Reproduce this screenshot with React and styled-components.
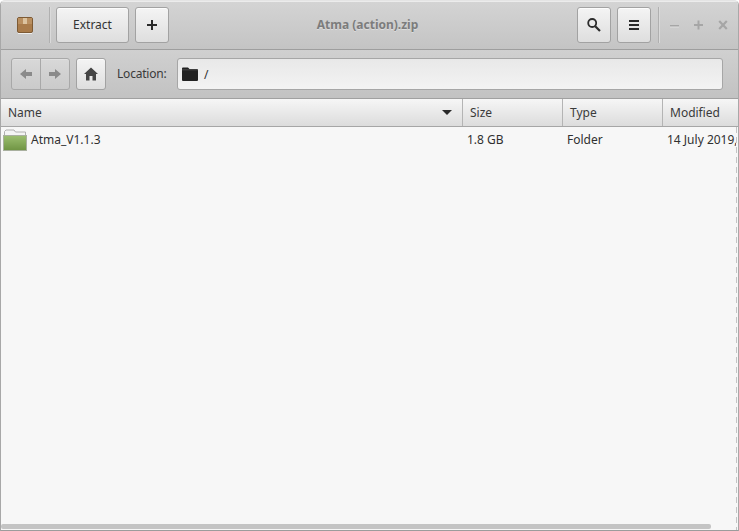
import React from 'react';
import styled, { createGlobalStyle } from 'styled-components';

const Global = createGlobalStyle`
  html, body {
    margin: 0;
    padding: 0;
    background: #fff;
  }
  * { box-sizing: border-box; }
`;

const Window = styled.div`
  width: 739px;
  height: 531px;
  display: flex;
  flex-direction: column;
  font-family: "Noto Sans", sans-serif;
  font-size: 12px;
  color: #303030;
  overflow: hidden;
  border-radius: 5px 5px 0 0;
  border: 1px solid #a8a8a8;
  border-top-color: #e4e4e4;
  border-bottom-color: #9c9c9c;
  background: #f7f7f7;
`;

const TitleBar = styled.div`
  height: 49px;
  flex: none;
  display: flex;
  align-items: center;
  padding: 0 10px 0 16px;
  background: linear-gradient(#d4d4d4, #c4c4c4);
  border-bottom: 1px solid #9e9e9e;
  box-shadow: inset 0 1px 0 #ececec;
`;

const AppIcon = styled.svg`
  width: 16px;
  height: 17px;
  flex: none;
`;

const Divider = styled.div`
  width: 1px;
  height: 36px;
  background: #b0b0b0;
  box-shadow: 1px 0 0 #dadada;
  flex: none;
  margin: ${(p) => p.$margin};
`;

const Button = styled.div`
  width: ${(p) => p.$width}px;
  height: ${(p) => p.$height || 36}px;
  margin-left: ${(p) => p.$left || 0}px;
  flex: none;
  display: flex;
  align-items: center;
  justify-content: center;
  border: 1px solid #a2a2a2;
  border-radius: 3px;
  background: linear-gradient(#f4f4f4, #dedede);
  box-shadow: inset 0 1px 0 #fcfcfc;
  color: #333;
  font-size: 12px;
`;

const ButtonLabel = styled.span`
  margin-bottom: 2px;
`;

const Title = styled.div`
  flex: 1;
  text-align: center;
  font-weight: 700;
  font-size: 12px;
  color: #7c7c7c;
  padding: 0 11px 2px 0;
  text-shadow: 0 1px 0 #dcdcdc;
`;

const WinControls = styled.div`
  display: flex;
  align-items: center;
  gap: 14px;
  margin-left: 11px;
`;

const Toolbar = styled.div`
  height: 49px;
  flex: none;
  display: flex;
  align-items: center;
  padding: 0 15px 0 10px;
  background: linear-gradient(#d0d0d0, #c2c2c2);
  border-bottom: 1px solid #a0a0a0;
`;

const NavGroup = styled.div`
  width: 59px;
  height: 32px;
  flex: none;
  display: flex;
  border: 1px solid #a8a8a8;
  border-radius: 3px;
  background: linear-gradient(#d8d8d8, #cacaca);
  box-shadow: inset 0 1px 0 #e0e0e0;
`;

const NavPart = styled.div`
  flex: 1;
  display: flex;
  align-items: center;
  justify-content: center;
  border-left: ${(p) => (p.$split ? '1px solid #a8a8a8' : 'none')};
`;

const LocationLabel = styled.span`
  margin: 0 0 2px 11px;
  width: 60px;
  flex: none;
  color: #3a3a3a;
  letter-spacing: -0.2px;
`;

const LocationEntry = styled.div`
  flex: 1;
  height: 32px;
  display: flex;
  align-items: center;
  gap: 6px;
  padding-left: 4px;
  border: 1px solid #a6a6a6;
  border-radius: 3px;
  background: linear-gradient(#e8e8e8, #f3f3f3);
  color: #303030;
`;

const Header = styled.div`
  height: 28px;
  flex: none;
  display: flex;
  background: linear-gradient(#f6f6f6, #dcdcdc);
  border-bottom: 1px solid #a6a6a6;
`;

const HeaderCell = styled.div`
  width: ${(p) => p.$width}px;
  flex: ${(p) => (p.$grow ? '1' : 'none')};
  display: flex;
  align-items: center;
  justify-content: space-between;
  padding: 0 10px 0 7px;
  border-right: ${(p) => (p.$last ? 'none' : '1px solid #b4b4b4')};
  color: #3a3a3a;
  white-space: nowrap;
`;

const SortArrow = styled.span`
  width: 0;
  height: 0;
  border-left: 5px solid transparent;
  border-right: 5px solid transparent;
  border-top: 5px solid #2a2a2a;
`;

const List = styled.div`
  flex: 1;
  position: relative;
  background: #f7f7f7;
`;

const Row = styled.div`
  height: 25px;
  display: flex;
  align-items: center;
`;

const Cell = styled.div`
  width: ${(p) => p.$width}px;
  flex: none;
  display: flex;
  align-items: center;
  gap: 4px;
  padding-left: ${(p) => p.$pad}px;
  white-space: nowrap;
  color: #303030;
`;

const ScrollBar = styled.div`
  position: absolute;
  left: 0;
  bottom: 1px;
  width: 710px;
  height: 5px;
  border-radius: 2px;
  background: #c4c4c4;
`;

const ResizeEdge = styled.div`
  position: absolute;
  right: 1px;
  top: 0;
  bottom: 0;
  width: 1px;
  background: repeating-linear-gradient(#c4c4c4 0 6px, #f7f7f7 6px 10px);
`;

const PackageIcon = () => (
  <AppIcon viewBox="0 0 16 17">
    <rect x="0.5" y="0.5" width="15" height="15" rx="1.5" fill="#a97b4a" stroke="#7d5a34" />
    <rect x="1" y="1" width="14" height="6" fill="#b98f60" />
    <rect x="6" y="1" width="4" height="6" fill="#dcc39f" />
    <rect x="1" y="16" width="14" height="1" fill="#eeeeee" />
  </AppIcon>
);

const PlusIcon = () => (
  <svg width="12" height="12" viewBox="0 0 12 12">
    <path d="M5 1h2v4h4v2H7v4H5V7H1V5h4z" fill="#2a2a2a" />
  </svg>
);

const SearchIcon = () => (
  <svg width="16" height="16" viewBox="0 0 16 16">
    <circle cx="6.2" cy="6" r="4" fill="none" stroke="#2c2c2c" strokeWidth="1.8" />
    <path d="M9.2 9.2L14 14" stroke="#2c2c2c" strokeWidth="2.2" />
  </svg>
);

const MenuIcon = () => (
  <svg width="10" height="10" viewBox="0 0 10 10">
    <path d="M0 0h10v2H0zM0 4h10v2H0zM0 8h10v2H0z" fill="#2a2a2a" />
  </svg>
);

const MinimizeIcon = () => (
  <svg width="10" height="12" viewBox="0 0 10 12">
    <rect x="0" y="6" width="9" height="1.6" fill="#a6a6a6" />
    <rect x="0" y="7.6" width="9" height="1" fill="#dcdcdc" />
  </svg>
);

const MaximizeIcon = () => (
  <svg width="10" height="12" viewBox="0 0 10 12">
    <path d="M3.5 1.5h2v3.5H9v2H5.5v3.5h-2V7H0V5h3.5z" fill="#a6a6a6" />
  </svg>
);

const CloseIcon = () => (
  <svg width="10" height="12" viewBox="0 0 10 12">
    <path d="M1.2 2l7.6 8M8.8 2l-7.6 8" stroke="#a6a6a6" strokeWidth="2.2" />
  </svg>
);

const BackIcon = () => (
  <svg width="12" height="10" viewBox="0 0 12 10">
    <path d="M0 5l6-5v3h6v4H6v3z" fill="#8a8a8a" />
  </svg>
);

const ForwardIcon = () => (
  <svg width="12" height="10" viewBox="0 0 12 10">
    <path d="M12 5L6 0v3H0v4h6v3z" fill="#8a8a8a" />
  </svg>
);

const HomeIcon = () => (
  <svg width="14" height="14" viewBox="0 0 14 14">
    <path d="M7 0.5L14 7h-2v6.5H8.5V9h-3v4.5H2V7H0z" fill="#444" />
  </svg>
);

const EntryFolder = () => (
  <svg width="16" height="14" viewBox="0 0 16 14">
    <path d="M0 1.5Q0 .5 1 .5h5l1.5 1.5H15q1 0 1 1V13q0 1-1 1H1q-1 0-1-1z" fill="#222" />
    <rect x="0" y="2.6" width="16" height="0.6" fill="#666" />
  </svg>
);

const RowFolder = () => (
  <svg width="24" height="22" viewBox="0 0 24 22">
    <defs>
      <linearGradient id="leaf" x1="0" y1="0" x2="0" y2="1">
        <stop offset="0" stopColor="#9cbf70" />
        <stop offset="1" stopColor="#6f9443" />
      </linearGradient>
    </defs>
    <path d="M1.5 6V2.5L3 1h8l1.5 2H22.5V6" fill="#f4f4f4" stroke="#b0b0b0" />
    <rect x="0.5" y="6.5" width="23" height="15" fill="url(#leaf)" stroke="#a9b09f" />
  </svg>
);

const App = () => {
	return (
		<Window>
			<Global />
			<TitleBar>
				<PackageIcon />
				<Divider $margin="0 6px 0 16px" />
				<Button $width={73}><ButtonLabel>Extract</ButtonLabel></Button>
				<Button $width={34} $left={6}><PlusIcon /></Button>
				<Title>Atma (action).zip</Title>
				<Button $width={34}><SearchIcon /></Button>
				<Button $width={34} $left={6}><MenuIcon /></Button>
				<Divider $margin="0 0 0 7px" />
				<WinControls>
					<MinimizeIcon />
					<MaximizeIcon />
					<CloseIcon />
				</WinControls>
			</TitleBar>
			<Toolbar>
				<NavGroup>
					<NavPart><BackIcon /></NavPart>
					<NavPart $split><ForwardIcon /></NavPart>
				</NavGroup>
				<Button $width={30} $height={32} $left={6}><HomeIcon /></Button>
				<LocationLabel>Location:</LocationLabel>
				<LocationEntry>
					<EntryFolder />
					<span>/</span>
				</LocationEntry>
			</Toolbar>
			<Header>
				<HeaderCell $width={462}>Name<SortArrow /></HeaderCell>
				<HeaderCell $width={100}>Size</HeaderCell>
				<HeaderCell $width={100}>Type</HeaderCell>
				<HeaderCell $grow $last>Modified</HeaderCell>
			</Header>
			<List>
				<Row>
					<Cell $width={461} $pad={2}><RowFolder />Atma_V1.1.3</Cell>
					<Cell $width={100} $pad={5}>1.8 GB</Cell>
					<Cell $width={100} $pad={5}>Folder</Cell>
					<Cell $width={75} $pad={5}>14 July 2019,</Cell>
				</Row>
				<ResizeEdge />
				<ScrollBar />
			</List>
		</Window>
	);
};

export default App;
